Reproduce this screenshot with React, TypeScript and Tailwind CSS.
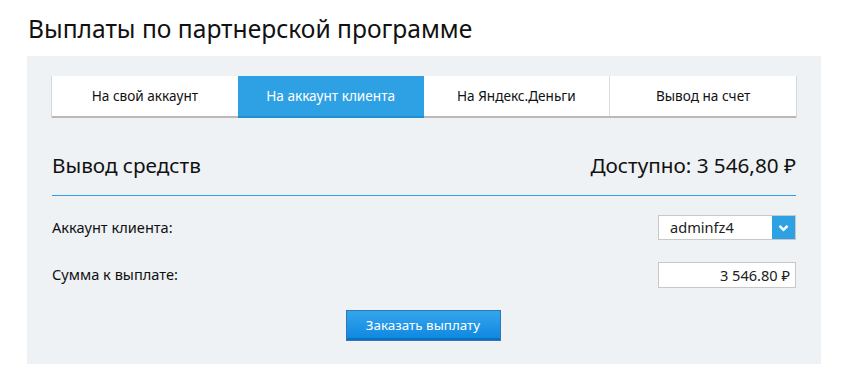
const tabs = ['На свой аккаунт', 'На аккаунт клиента', 'На Яндекс.Деньги', 'Вывод на счет'];

const font = { fontFamily: '"Noto Sans", "Open Sans", sans-serif' };

export default function App() {
  return (
    <div className="w-[845px] h-[380px] bg-white pl-[27px] pt-[13px]" style={font}>
      <h1 className="text-[24.6px] leading-[32px] text-[#111] ml-[1px] mb-[11px]">
        Выплаты по партнерской программе
      </h1>
      <div className="w-[794px] h-[308px] bg-[#eef2f5] px-[25px] pt-[20px]">
        <div className="flex h-[42px] border-b-2 border-[#b9b9b9] shadow-[-1px_0_0_#d5d8da,1px_0_0_#d5d8da]">
          {tabs.map((t, i) => (
            <div
              key={t}
              className={
                i === 1
                  ? 'flex-1 flex items-center justify-center bg-[#2ea1e4] text-white text-[13.6px] -mb-[2px] border-b-2 border-[#1f8fd3]'
                  : 'flex-1 flex items-center justify-center bg-white text-[#111] text-[13.6px] ' +
                    (i === 3 ? 'border-l border-[#dcdcdc]' : '')
              }
            >
              {t}
            </div>
          ))}
        </div>
        <div className="flex items-center justify-between mt-[32px] h-[32px] text-[20.7px] text-[#111]">
          <span>Вывод средств</span>
          <span>Доступно: 3 546,80 ₽</span>
        </div>
        <div className="h-px bg-[#2ea1e4] mt-[13px]" />
        <div className="flex items-center justify-between mt-[19px] h-[25px]">
          <span className="text-[14.6px] text-[#111]">Аккаунт клиента:</span>
          <div className="w-[138px] h-[25px] flex border border-[#c8c8c8] bg-white">
            <span className="flex-1 pl-[11px] text-[14.6px] leading-[23px] text-[#222]">adminfz4</span>
            <span className="w-[23px] h-[23px] bg-[#2ea1e4] flex items-center justify-center">
              <svg width="11" height="8" viewBox="0 0 11 8">
                <path d="M1.5 1.8 L5.5 5.8 L9.5 1.8" stroke="white" strokeWidth="2.4" fill="none" />
              </svg>
            </span>
          </div>
        </div>
        <div className="flex items-center justify-between mt-[22px] h-[25px]">
          <span className="text-[14.6px] text-[#111]">Сумма к выплате:</span>
          <div className="w-[138px] h-[26px] border border-[#c8c8c8] bg-white text-right pr-[5px] text-[14.6px] leading-[24px] text-[#222]">
            3 546.80 ₽
          </div>
        </div>
        <div className="flex justify-center mt-[23px]">
          <button className="w-[155px] h-[31px] ml-[-2px] border border-[#2f78b0] bg-gradient-to-b from-[#32a6ec] to-[#0b86e0] text-white text-[13.4px] shadow-[inset_0_-2px_0_#0a6fc0]">
            Заказать выплату
          </button>
        </div>
      </div>
    </div>
  );
}
